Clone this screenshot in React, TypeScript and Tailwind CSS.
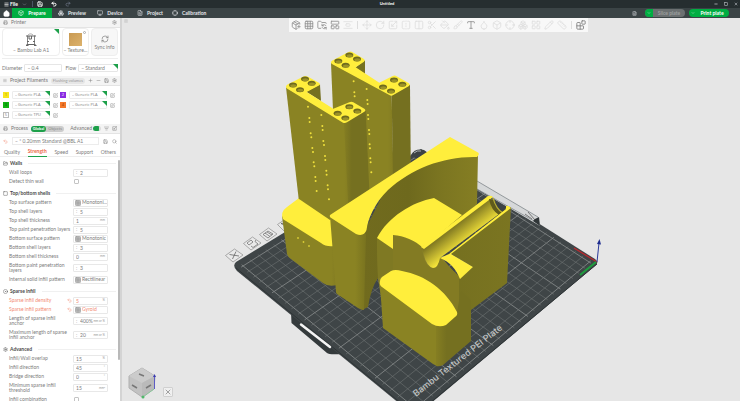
import React from 'react';
import {
    AlignVerticalSpaceAround, Blocks, Box, Boxes, Brush, ChevronDown, CircleDot, Columns2, Crosshair, Droplet,
    FileText, FlipHorizontal, FolderOpen, FolderSync, Grid3x3, House, LayoutGrid, LayoutPanelTop, ListFilter, Menu,
    Minus, Monitor, Move, PackagePlus, PaintBucket, Pencil, Plus, Printer, Redo2, RefreshCw, RotateCw, Ruler, Save,
    Scaling, Scissors, Search, Settings, Square, SquarePen, Type, Undo2, X,
} from 'lucide-react';
import type { LucideIcon } from 'lucide-react';

type Point = [number, number];

interface Setting {
    label: string;
    kind: 'step' | 'text' | 'select' | 'check';
    value?: string;
    unit?: string;
    changed?: boolean;
    tall?: boolean;
}

interface Section {
    title: string;
    icon: LucideIcon;
    rows: Setting[];
}

const SECTIONS: Section[] = [
    {
        title: 'Walls',
        icon: FolderOpen,
        rows: [
            { label: 'Wall loops', kind: 'step', value: '2' },
            { label: 'Detect thin wall', kind: 'check' },
        ],
    },
    {
        title: 'Top/bottom shells',
        icon: Square,
        rows: [
            { label: 'Top surface pattern', kind: 'select', value: 'Monotoni…' },
            { label: 'Top shell layers', kind: 'step', value: '5' },
            { label: 'Top shell thickness', kind: 'text', value: '1', unit: 'mm' },
            { label: 'Top paint penetration layers', kind: 'step', value: '5' },
            { label: 'Bottom surface pattern', kind: 'select', value: 'Monotonic' },
            { label: 'Bottom shell layers', kind: 'step', value: '3' },
            { label: 'Bottom shell thickness', kind: 'text', value: '0', unit: 'mm' },
            { label: 'Bottom paint penetration layers', kind: 'step', value: '3', tall: true },
            { label: 'Internal solid infill pattern', kind: 'select', value: 'Rectilinear' },
        ],
    },
    {
        title: 'Sparse infill',
        icon: CircleDot,
        rows: [
            { label: 'Sparse infill density', kind: 'text', value: '5', unit: '%', changed: true },
            { label: 'Sparse infill pattern', kind: 'select', value: 'Gyroid', changed: true },
            { label: 'Length of sparse infill anchor', kind: 'step', value: '400%', unit: 'mm or %', tall: true },
            { label: 'Maximum length of sparse infill anchor', kind: 'step', value: '20', unit: 'mm or %', tall: true },
        ],
    },
    {
        title: 'Advanced',
        icon: Settings,
        rows: [
            { label: 'Infill/Wall overlap', kind: 'text', value: '15', unit: '%' },
            { label: 'Infill direction', kind: 'text', value: '45', unit: '°' },
            { label: 'Bridge direction', kind: 'text', value: '0', unit: '°' },
            { label: 'Minimum sparse infill threshold', kind: 'text', value: '15', unit: 'mm²', tall: true },
            { label: 'Infill combination', kind: 'check' },
        ],
    },
];

const FILAMENTS = [
    { id: 1, name: 'Generic PLA', swatch: 'bg-[#f8e71c] text-[#8a7d00]' },
    { id: 2, name: 'Generic PLA', swatch: 'bg-[#8a2be2] text-white' },
    { id: 3, name: 'Generic PLA', swatch: 'bg-[#10b310] text-[#045a04]' },
    { id: 4, name: 'Generic PLA', swatch: 'bg-[#f5792a] text-[#8c3500]' },
    { id: 5, name: 'Generic TPU', swatch: 'bg-white text-[#777] border border-[#bbb]' },
];

const TOOLS: { icon: LucideIcon; on?: boolean }[] = [
    { icon: PackagePlus, on: true }, { icon: Grid3x3, on: true }, { icon: FolderSync, on: true },
    { icon: LayoutPanelTop, on: true }, { icon: AlignVerticalSpaceAround },
];

const EDIT_TOOLS: { icon: LucideIcon; on?: boolean }[] = [
    { icon: Move }, { icon: RotateCw }, { icon: Scaling }, { icon: FlipHorizontal }, { icon: Columns2 },
    { icon: Scissors }, { icon: PaintBucket }, { icon: Brush }, { icon: Type, on: true }, { icon: Droplet },
    { icon: Box }, { icon: Crosshair }, { icon: Boxes }, { icon: LayoutGrid }, { icon: Pencil }, { icon: Ruler },
];

const Corner: React.FC = () => (
    <svg className="absolute right-0 top-0 size-[5px]" viewBox="0 0 5 5">
        <path d="M0 0h5v5z" fill="#1da04a" />
    </svg>
);

const TitleBar: React.FC = () => (
    <div className="flex h-2 shrink-0 items-center bg-[#262e30] text-white">
        <div className="flex flex-1 items-center gap-1 pl-1">
            <button className="flex items-center gap-px font-bold" aria-label="File menu">
                <Menu size={5} strokeWidth={3} />File
            </button>
            <ChevronDown size={5} className="text-gray-400" />
            <span className="ml-px h-1.5 w-px bg-gray-600" />
            <button aria-label="Save"><Save size={6} strokeWidth={3} /></button>
            <button aria-label="Undo" className="ml-1"><Undo2 size={6} strokeWidth={4} /></button>
            <button aria-label="Redo" className="ml-1 text-gray-500"><Redo2 size={6} strokeWidth={3} /></button>
        </div>
        <span className="pl-8 text-[4px] font-bold">Untitled</span>
        <div className="flex flex-1 justify-end gap-1.5 pr-0.5 text-gray-300">
            <button aria-label="Minimize"><Minus size={4} strokeWidth={4} /></button>
            <button aria-label="Restore"><Square size={4} strokeWidth={3} /></button>
            <button aria-label="Close"><X size={4} strokeWidth={3} /></button>
        </div>
    </div>
);

const TabBar: React.FC = () => (
    <nav className="flex h-[10px] shrink-0 items-center bg-[#3b4446] font-bold text-gray-200">
        <button className="flex w-3 justify-center text-white" aria-label="Home">
            <House size={7} fill="currentColor" />
        </button>
        <button className="flex h-full w-10 items-center justify-center gap-1 bg-[#00ae42] text-white">
            <Box size={6} />Prepare
        </button>
        <button className="flex w-10 items-center justify-center gap-1"><Boxes size={6} />Preview</button>
        <button className="flex w-9 items-center justify-center gap-1"><Monitor size={6} />Device</button>
        <button className="ml-1 flex w-9 items-center justify-center gap-1"><FileText size={6} />Project</button>
        <button className="ml-1 flex items-center gap-1"><Crosshair size={6} />Calibration</button>
        <div className="flex flex-1 items-center justify-end gap-1 pr-[11px]">
            <FileText size={5} className="mr-1" />
            <button className="flex h-2 w-10 items-center rounded-full bg-[#6b7071] text-[#9b9f9f]">
                <span className="flex h-2 w-2 items-center justify-center rounded-l-full bg-[#00ae42] text-white">
                    <ChevronDown size={4} />
                </span>
                <span className="flex-1">Slice plate</span>
            </button>
            <button className="flex h-2 w-10 items-center rounded-full bg-[#00ae42] text-white">
                <ChevronDown size={4} className="ml-0.5" />
                <span className="flex-1">Print plate</span>
            </button>
        </div>
    </nav>
);

const PanelHeader: React.FC<{ icon: LucideIcon; title: string; children?: React.ReactNode }> = ({ icon: Icon, title, children }) => (
    <div className="flex h-[10px] items-center gap-[3px] whitespace-nowrap border-b border-[#e4e4e4] bg-[#f4f4f4] px-[3px] text-[#777]">
        <Icon size={5} />
        <span>{title}</span>
        {children}
    </div>
);

const PrinterPanel: React.FC = () => (
    <section>
        <PanelHeader icon={Printer} title="Printer">
            <button className="ml-auto" aria-label="Printer settings"><Settings size={5} /></button>
        </PanelHeader>
        <div className="flex h-[30px] gap-0.5 px-0.5 pb-0.5 whitespace-nowrap">
            <button className="relative flex flex-1 flex-col items-center justify-end gap-0.5 rounded-sm border border-[#eee] pb-0.5">
                <Corner />
                <svg width="12" height="13" viewBox="0 0 12 13" fill="none" stroke="#666">
                    <path d="M2.500 12V2.500M9.500 12V2.500" strokeWidth="0.800" />
                    <path d="M1 3h10M1.500 11.500h9" strokeWidth="1.200" />
                    <path d="M4 3v3h2.500V3M2 8.500h2M8 8.500h2M1 12.500h2.500M9 12.500h2.500" />
                    <path d="M3 2c1-1.500 4-1.500 5 0" strokeWidth="0.500" />
                </svg>
                <span>– Bambu Lab A1</span>
            </button>
            <button className="relative flex w-[27px] flex-col items-center justify-end gap-0.5 rounded-sm border border-[#eee] pb-0.5">
                <span className="size-[13px] bg-linear-to-br from-[#c99a52] to-[#dcb26c]" />
                <span className="absolute right-0.5 top-0.5 size-[3px] rounded-full border border-[#aaa]" />
                <span>– Texture…</span>
            </button>
            <button className="flex w-[27px] flex-col items-center justify-center gap-0.5 rounded-sm border border-[#eee] bg-[#f7f7f7]">
                <RefreshCw size={8} strokeWidth={2} />
                <span>Sync info</span>
            </button>
        </div>
        <div className="mx-0.5 h-[3px] border-t border-[#eee]" />
        <div className="flex h-[14px] items-center gap-0.5 px-0.5">
            <label htmlFor="diameter">Diameter</label>
            <select id="diameter" className="h-2 w-[38px] appearance-none rounded-[1px] border border-[#e6e6e6] pl-0.5">
                <option>– 0.4</option>
            </select>
            <label htmlFor="flow" className="ml-px">Flow</label>
            <div className="relative flex-1">
                <Corner />
                <select id="flow" className="block h-2 w-full appearance-none rounded-[1px] border border-[#e6e6e6] pl-0.5">
                    <option>– Standard</option>
                </select>
            </div>
        </div>
    </section>
);

const FilamentPanel: React.FC = () => (
    <section className="pt-px">
        <PanelHeader icon={Menu} title="Project Filaments">
            <button className="ml-auto rounded-full bg-[#e6e6e6] px-0.5 py-px text-[4px] text-[#999]">Flushing volumes</button>
            <button aria-label="Add filament"><Plus size={5} /></button>
            <button aria-label="Remove filament"><Minus size={5} /></button>
            <button aria-label="Sync filaments"><Save size={5} /></button>
            <button aria-label="Filament settings"><Settings size={5} /></button>
        </PanelHeader>
        <div className="grid grid-cols-2 gap-y-0.5 px-[3px] pb-[5px] pt-[5px] font-['Open_Sans',sans-serif] text-[4px]">
            {FILAMENTS.map(({ id, name, swatch }) => (
                <div key={id} className="flex h-2 items-center gap-[3px]">
                    <span className={`flex size-[6px] items-center justify-center ${swatch}`}>{id}</span>
                    <div className="relative">
                        <Corner />
                        <select aria-label={`Filament ${id}`} className="block h-2 w-[38px] appearance-none rounded-[1px] border border-[#ececec] pl-0.5">
                            <option>– {name}</option>
                        </select>
                    </div>
                    <button aria-label={`Edit filament ${id}`}><SquarePen size={5} /></button>
                </div>
            ))}
        </div>
    </section>
);

const SettingControl: React.FC<{ id: string; row: Setting }> = ({ id, row }) => {
    if (row.kind === 'check') {
        return <input id={id} type="checkbox" className="ml-px size-[5px] appearance-none rounded-[1px] border border-[#c4c4c4]" />;
    }
    return (
        <div className="flex h-2 w-[35px] items-center rounded-[1px] border border-[#e8e8e8]">
            {row.kind === 'select' ? (
                <>
                    <Grid3x3 size={6} className="ml-px mr-px shrink-0 bg-[#ddd] text-[#888]" />
                    <select id={id} className="min-w-0 flex-1 appearance-none">
                        <option>{row.value}</option>
                    </select>
                </>
            ) : (
                <>
                    {row.kind === 'step' && <span className="w-1 pl-0.5 text-[#aaa]">:</span>}
                    <input id={id} type="text" defaultValue={row.value} className="min-w-0 flex-1 pl-0.5" />
                    {row.unit && <span className="shrink-0 pr-0.5 text-[3px] text-[#999]">{row.unit}</span>}
                </>
            )}
        </div>
    );
};

const SettingSection: React.FC<{ section: Section }> = ({ section }) => {
    const Icon = section.icon;
    return (
        <fieldset className="mb-[3px]">
            <legend className="flex h-[9px] w-full items-center gap-0.5 pl-[3px] pr-1 font-bold text-[#4a4a4a]">
                <Icon size={5} />
                {section.title}
                <span className="ml-1 h-px flex-1 bg-[#f0f0f0]" />
            </legend>
            {section.rows.map((row) => {
                const id = row.label.toLowerCase().replace(/[^a-z]+/g, '-');
                return (
                    <div key={id} className={`flex items-center pl-[9px] ${row.tall ? 'h-[14px]' : 'h-[9px]'} ${row.changed ? 'text-[#f28a72]' : ''}`}>
                        <label htmlFor={id} className={`shrink-0 leading-[5px] ${row.tall ? 'w-[58px]' : 'w-[58px] whitespace-nowrap'}`}>{row.label}</label>
                        <span className="flex w-1.5 shrink-0">{row.changed && <Undo2 size={5} />}</span>
                        <div className="flex"><SettingControl id={id} row={row} /></div>
                    </div>
                );
            })}
        </fieldset>
    );
};

const ProcessPanel: React.FC = () => (
    <section className="min-h-0 min-w-0 flex-1">
        <PanelHeader icon={Printer} title="Process">
            <div className="flex h-[6px] items-center rounded-full bg-[#ccc] text-[4px]">
                <button className="flex h-[6px] items-center rounded-full bg-[#1da04a] px-0.5 font-bold text-white">Global</button>
                <button className="px-0.5 text-[#888]">Objects</button>
            </div>
            <label className="ml-auto flex items-center gap-px">
                Advanced
                <input type="checkbox" defaultChecked className="h-[5px] w-2 appearance-none rounded-full border-r-2 border-[#ddd] bg-[#1da04a]" />
            </label>
            <button aria-label="Compare"><ListFilter size={5} /></button>
            <button aria-label="Tune"><Scaling size={5} /></button>
        </PanelHeader>
        <div className="flex h-[14px] items-center gap-1 px-[3px]">
            <Undo2 size={5} className="text-[#f28a72]" />
            <select aria-label="Process preset" className="h-2 min-w-0 flex-1 appearance-none border border-[#ececec] pl-0.5">
                <option>– * 0.20mm Standard @BBL A1</option>
            </select>
            <button aria-label="Save preset"><Save size={5} /></button>
            <button aria-label="Search"><Search size={5} /></button>
        </div>
        <div className="flex h-[9px] items-center justify-between border-b border-[#eee] px-1">
            <button>Quality</button>
            <button className="h-[9px] border-b border-[#1da04a] font-bold text-[#ec6a4c]">Strength</button>
            <button>Speed</button>
            <button>Support</button>
            <button>Others</button>
        </div>
        <div className="pt-0.5">
            {SECTIONS.map((section) => <SettingSection key={section.title} section={section} />)}
        </div>
    </section>
);

// Corners of the build plate on screen: left, back, right, front
const PLATE: Point[] = [[236, 266], [421, 150], [596, 262], [415, 415]];

// Perspective mapping of the unit square onto the plate
const project = (u: number, v: number): Point => {
    const [[x0, y0], [x1, y1], [x2, y2], [x3, y3]] = PLATE;
    const dx1 = x1 - x2, dx2 = x3 - x2, sx = x0 - x1 + x2 - x3;
    const dy1 = y1 - y2, dy2 = y3 - y2, sy = y0 - y1 + y2 - y3;
    const det = dx1 * dy2 - dx2 * dy1;
    const g = (sx * dy2 - dx2 * sy) / det;
    const h = (dx1 * sy - sx * dy1) / det;
    const w = g * u + h * v + 1;
    return [
        ((x1 - x0 + g * x1) * u + (x3 - x0 + h * x3) * v + x0) / w,
        ((y1 - y0 + g * y1) * u + (y3 - y0 + h * y3) * v + y0) / w,
    ];
};

const CELLS = 26;

const PlateGrid: React.FC = () => (
    <g>
        {Array.from({ length: CELLS }, (_, i) => {
            const t = (i + 0.5) / CELLS;
            const [ax, ay] = project(t, 0.01);
            const [bx, by] = project(t, 0.99);
            const [cx, cy] = project(0.01, t);
            const [dx, dy] = project(0.99, t);
            const bold = i % 5 === 0;
            return (
                <path key={i} d={`M${ax} ${ay}L${bx} ${by}M${cx} ${cy}L${dx} ${dy}`}
                    stroke={bold ? '#8a8e8e' : '#6e7374'} strokeWidth={bold ? 0.8 : 0.6} />
            );
        })}
    </g>
);

const HOLES: Point[] = [
    [255, 117], [275, 130], [219, 135], [240, 149], [388, 200], [412, 213], [353, 220], [376, 234],
    [388, 45], [411, 57], [355, 63], [377, 76], [522, 120], [547, 133], [489, 141], [513, 153],
];

const BACK_DOTS: Point[] = [
    [401, 124], [403, 157], [404, 169], [440, 147], [442, 180], [443, 192], [444, 225], [445, 237],
    [447, 270], [448, 282], [449, 313], [450, 325], [451, 355], [452, 367], [454, 397],
];

const FRONT_DOTS: Point[] = [
    [264, 200], [268, 234], [269, 246], [272, 280], [274, 292], [277, 324], [279, 336], [281, 367],
    [283, 379], [286, 411], [287, 423], [290, 453], [304, 225], [307, 258], [308, 270], [310, 303],
    [312, 315], [315, 348], [316, 360], [319, 392], [320, 404], [323, 436], [324, 448], [327, 478],
];

const Dots: React.FC<{ points: Point[] }> = ({ points }) => (
    <>{points.map(([x, y]) => <circle key={`${x}-${y}`} cx={x} cy={y} r="3" fill="#efe03c" />)}</>
);

const Towers: React.FC = () => (
    <g transform="translate(220 40) scale(0.3333)">
        <path d="M333 68L515 166L522 470L350 470Z" fill="url(#left)" />
        <path d="M515 166L570 134L573 440L520 470Z" fill="#757020" />
        <path d="M404 84L435 61V104Z" fill="#757020" />
        <path d="M333 66Q335 62 340 60L386 36Q392 33 398 37L432 57Q437 61 432 65L407 82L478 128L518 108Q524 105 530 109L567 130Q572 134 567 138L520 165Q514 169 508 165L336 72Q332 69 333 66Z" fill="#ffee3c" />
        <Dots points={BACK_DOTS} />
        <path d="M198 142L375 248L392 500L330 540L236 476Z" fill="url(#left)" />
        <path d="M372 248L437 212L449 470L385 500Z" fill="url(#right)" />
        <path d="M259 155L300 133L303 183Z" fill="#757020" />
        <path d="M198 140Q198 136 204 133L252 109Q258 106 264 110L298 129Q302 133 298 136L260 156L340 206L388 187Q394 184 400 187L433 206Q439 211 433 215L381 247Q375 251 369 248L202 146Q198 144 198 140Z" fill="#ffee3c" />
        <Dots points={FRONT_DOTS} />
        {HOLES.map(([x, y]) => (
            <g key={`${x}-${y}`}>
                <ellipse cx={x} cy={y} rx="12" ry="7.500" fill="#6f6a1e" />
                <ellipse cx={x + 1} cy={y + 2} rx="9" ry="4.500" fill="#9b9227" />
            </g>
        ))}
    </g>
);

const Model: React.FC = () => (
    <g>
        {/* left block */}
        <path d="M282 216L287 254Q288 257 291 259L323 283Q328 287 337 285V240Z" fill="url(#left)" />
        <path d="M283 219Q280 212 287 207L299 198L334 218V246Q326 247 321 243L286 221Q284 220 283 219Z" fill="#ffee3c" />
        <g fill="#d9cc36">
            <circle cx="298" cy="238" r="0.900" /><circle cx="303.500" cy="242" r="0.900" /><circle cx="309" cy="246" r="0.900" />
        </g>
        <Towers />

        {/* arch wall */}
        <path d="M364 232L390 180L440 155L478 154L477 204L462 218L400 300L378 278Q371 288 368 307L362 310Z" fill="url(#arch)" />
        <path d="M330 216L357 234L366 234L364 310Q361 310 358 308L337 294Q336 293 336 292Z" fill="url(#wall)" />
        <path d="M330 215L450 137L478 152.500Q480 154 477 157C445 156 412 168 388 190C374 204 368 219 366.500 230Q364 237 356 234L332 218.500Q329 217 330 215Z" fill="#ffee3c" />

        {/* body with the half pipe channel */}
        <path d="M377 238L393 246V234L425 246L442 258L460 279L462 330L385 320L378 279Z" fill="#88802a" />
        <path d="M377 238L393 246V270L378 279Z" fill="#7f7923" />
        <path d="M393 234.500C405 236 414 240 422 247C423 260 427 268 433 268Q438 267 440 258L462 279L461 320L393 300Z" fill="#837b23" />
        <path d="M450 253L511 207L507 283L471 310V340L459 340V279L473 267Z" fill="url(#side)" />
        <path d="M434 198L462 215L423 248C415 240 404 236 393 235V249L377 238C388 217 412 202 434 198Z" fill="#ffee3c" />
        <path d="M422 247L489 198L507 208L440 258Q438 268 433 268Q425 266 422 247Z" fill="url(#pipe)" />
        <path d="M421 247L488 196Q491 195 493 197L424 249Z" fill="#ffee3c" />
        <path d="M489 199Q491 210 499 215L505 211Q499 212 494 200Z" fill="#5f5a1b" />
        <path d="M493 200Q496 211 503 212L507 207Z" fill="#3c4244" />
        <path d="M493 198Q496 209 503 213" fill="none" stroke="#b8ac2d" strokeWidth="1.200" />
        <path d="M449 254L506 209L506 206Q508 205 511 208L451 254L473 267L460 279C456 269 450 262 440 258Z" fill="#ffee3c" />

        {/* front block */}
        <path d="M380 284L383 328L433 364Q438 367 442 364V320Z" fill="url(#left)" />
        <path d="M436 325L457 312L461 290L471 300V341L443 365Q439 367 436 366Z" fill="url(#right)" />
        <path d="M380 281Q380 279 382 277L391 271Q395 269 402 271C425 275 446 290 457 312Q458 315 455 317L446 325Q439 328 432 324L382 287Q379 285 380 281Z" fill="#ffee3c" />
    </g>
);

const PlateIcons: React.FC = () => (
    <g fill="#e9e9e9" stroke="#8d8d8d" strokeWidth="0.7">
        <g transform="translate(234 255)">
            <path d="M-8.500 0.500L0.500 -6L9 0L-1 7Z" /><path d="M-4.500 -0.500L5 1M-1.500 4L2 -3.500" stroke="#555" />
        </g>
        <g transform="translate(252 243)">
            <path d="M-8.500 0.500L0.500 -6L9 0L-1 7Z" /><path d="M-5 0L-1 -3L1 -1L-3 2ZM-1 3L1 4.500L6 1L3 -1.500L4 -3" stroke="#666" />
        </g>
        <g transform="translate(268 234)">
            <path d="M-8.500 0.500L0.500 -6L9 0L-1 7Z" /><path d="M-5 0.500L0 -3L5 0L0 4ZM-3 -1L2 2.500M-1 -2L4 1" stroke="#666" />
        </g>
        <g transform="translate(285 224)">
            <path d="M-7.500 0.500L0.500 -5L9 0L-1 7Z" /><path d="M-4 -0.500L2 2.500V-1Z" stroke="#555" />
        </g>
    </g>
);

const Scene: React.FC = () => (
    <svg className="block h-full w-full" viewBox="122 18 618 383" fill="none">
        <defs>
            <linearGradient id="left"><stop offset="0" stopColor="#8a8323" /><stop offset="0.9" stopColor="#8a8323" /><stop offset="1" stopColor="#827b22" /></linearGradient>
            <linearGradient id="right"><stop offset="0" stopColor="#857e22" /><stop offset="0.3" stopColor="#757020" /></linearGradient>
            <linearGradient id="wall"><stop offset="0" stopColor="#8a8323" /><stop offset="0.7" stopColor="#8a8323" /><stop offset="1" stopColor="#79731f" /></linearGradient>
            <linearGradient id="arch"><stop offset="0" stopColor="#716b1e" /><stop offset="0.4" stopColor="#6e691d" /><stop offset="0.7" stopColor="#7c7621" /><stop offset="1" stopColor="#857e23" /></linearGradient>
            <linearGradient id="side"><stop offset="0" stopColor="#757020" /><stop offset="1" stopColor="#7b7521" /></linearGradient>
            <linearGradient id="pipe" gradientUnits="userSpaceOnUse" x1="448" y1="228" x2="462" y2="246">
                <stop offset="0.1" stopColor="#807821" /><stop offset="0.5" stopColor="#b5a92d" /><stop offset="1" stopColor="#f7e63a" />
            </linearGradient>
        </defs>

        {/* build plate */}
        <path d="M291 312L291.500 323L327 353Q329 355 342 354Z" fill="#343a3c" />
        <path d="M236 262Q232 266 237 271L400 404H430L596 265Q599 262 595 259L421 149Z" fill="#3f4547" />
        <PlateGrid />
        <path d="M236 268L402 404M597 264L430 403" stroke="#2f3537" />
        <path d="M301 324.500L330 347" stroke="#f4f4f4" strokeWidth="2.500" strokeLinecap="round" />
        <path d="M411 155Q415 148 424 150L428 153L418 160Z" fill="#3c4345" />
        <path d="M414 153Q417 150 421 151" stroke="#aab0b2" />
        <path d="M477 181L533 214L539 218L540 226L477 189Z" fill="#d6d8d9" />
        <path d="M477 181L538 217M477 189L536 222" stroke="#80868a" strokeWidth="0.8" />
        <path d="M525 214L532 219M528 212L535 220" stroke="#777" />
        <path d="M535 219L539 217L540 226L533 221Z" fill="#303638" />
        <PlateIcons />
        <text x="416" y="397" transform="rotate(-38 416 397)" fontSize="9" fontWeight="500" fill="#c3c6c6" fontFamily="Inter, sans-serif">
            Bambu Textured PEI Plate
        </text>

        <Model />

        {/* origin axes */}
        <path d="M574 248L597 262" stroke="#c1272d" strokeWidth="1.200" />
        <path d="M596 262L580 275" stroke="#1e9e3e" strokeWidth="2" />
        <path d="M597 262L599 243" stroke="#2b3a9b" />
        <path d="M597 244L599.500 239L601 244.500Z" fill="#1f2d8f" />

        {/* view cube */}
        <path d="M129 376L142 368L155 376L154 389L142 397L129 388Z" fill="#c2c2c2" stroke="#b0b0b0" />
        <path d="M129 376L142 368L155 376L142 383Z" fill="#cbcbcb" />
        <path d="M142 383L155 376L154 389L142 397Z" fill="#bababa" />
        <path d="M139 374L144 376M132 385L137 388M146 388L151 385" stroke="#777" strokeWidth="1.500" />
        <path d="M154.500 389V376" stroke="#5c5cc4" /><path d="M153 377L154.500 374L156 377Z" fill="#3a3ab0" />
        <path d="M154 389L143 397" stroke="#8ac79a" /><circle cx="143" cy="397" r="1.500" fill="#4fb86a" />
    </svg>
);

const Toolbar: React.FC = () => (
    <div className="absolute inset-x-0 top-0 flex justify-center pl-3.5">
        <div className="flex h-[14px] items-center gap-[3px] bg-[#f8f8f8] px-0.5">
            {TOOLS.map(({ icon: Icon, on }, i) => (
                <button key={i} aria-label={`Plate tool ${i + 1}`} className={on ? 'text-[#8f8f8f]' : 'text-[#dedede]'}>
                    <Icon size={10} strokeWidth={2} />
                </button>
            ))}
            <span className="mx-px h-2 w-px bg-[#ddd]" />
            {EDIT_TOOLS.map(({ icon: Icon, on }, i) => (
                <button key={i} aria-label={`Edit tool ${i + 1}`} className={on ? 'text-[#8f8f8f]' : 'text-[#dedede]'}>
                    <Icon size={10} strokeWidth={2} />
                </button>
            ))}
            <span className="mx-px h-2 w-px bg-[#ddd]" />
            <button aria-label="Assembly view" className="text-[#7b7b7b]"><Blocks size={10} strokeWidth={2} /></button>
        </div>
    </div>
);

export default function App() {
    return (
        <div className="flex h-screen flex-col overflow-hidden bg-[#e6e6e6] font-[Lato,sans-serif] text-[5px] leading-none text-[#7c7c7c]">
            <TitleBar />
            <TabBar />
            <div className="flex min-h-0 flex-1">
                <aside className="flex w-[122px] shrink-0 flex-col overflow-hidden border-r-2 border-[#d4d4d4] bg-white">
                    <PrinterPanel />
                    <FilamentPanel />
                    <div className="relative flex min-h-0 flex-1">
                        <ProcessPanel />
                        <span className="absolute right-0 top-9 h-[200px] w-0.5 rounded-full bg-[#b9b9b9]" />
                    </div>
                </aside>
                <main className="relative min-w-0 flex-1">
                    <Scene />
                    <button className="absolute left-[2px] top-px text-[#999]" aria-label="Collapse sidebar"><Menu size={4} /></button>
                    <Toolbar />
                    <button className="absolute bottom-1 left-[41px] rounded-[1px] border border-[#d0d0d0] bg-[#f0f0f0] text-[#777]" aria-label="Close view">
                        <X size={8} strokeWidth={2} />
                    </button>
                </main>
            </div>
        </div>
    );
}
